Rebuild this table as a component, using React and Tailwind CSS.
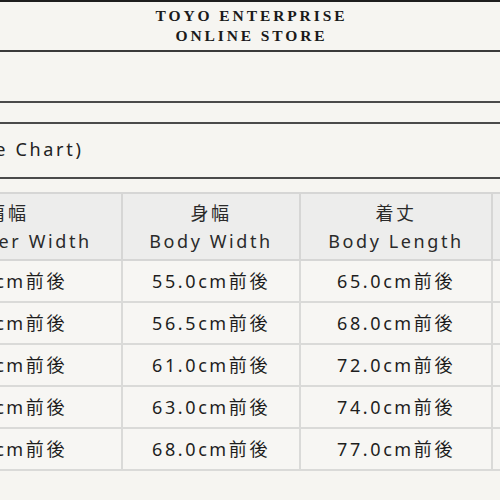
import React from "react";

const sans = { fontFamily: '"Noto Sans", "Noto Sans CJK JP", sans-serif' };

const rows = [
  ["52.0", "55.0", "65.0"],
  ["53.5", "56.5", "68.0"],
  ["55.0", "61.0", "72.0"],
  ["56.5", "63.0", "74.0"],
  ["58.0", "68.0", "77.0"],
];

export default function App() {
  return (
    <div className="w-[500px] h-[500px] overflow-hidden bg-[#f6f5f1] text-[#222]">
      <div className="h-[2px] bg-[#1e1e1e]" />
      <div className="h-[48px] flex flex-col items-center justify-center font-['Liberation_Serif',serif] font-bold text-[15.5px] leading-[20px] tracking-[2.9px] text-[#1a1a1a]">
        <div className="pl-[3px]">TOYO ENTERPRISE</div>
        <div className="pl-[3px]">ONLINE STORE</div>
      </div>
      <div className="h-[2px] bg-[#3a3a3a]" />
      <div className="h-[49px]" />
      <div className="h-[2px] bg-[#4a4a4a]" />
      <div className="h-[19px]" />
      <div className="h-[2px] bg-[#4a4a4a]" />
      <div className="h-[53px] flex items-center">
        <div className="ml-[-44px] text-[18px] tracking-[2.7px] text-[#222] pb-[2px]" style={sans}>(Size Chart)</div>
      </div>
      <div className="h-[2px] bg-[#4a4a4a]" />
      <div className="h-[13px]" />
      <table className="table-fixed border-collapse ml-[-107px] w-[714px] text-[18px] tracking-[2.6px]" style={sans}>
        <colgroup>
          <col className="w-[228px]" />
          <col className="w-[178px]" />
          <col className="w-[192px]" />
          <col className="w-[116px]" />
        </colgroup>
        <thead>
          <tr className="bg-[#ededec]">
            <th className="h-[67px] border-2 border-[#d6d6d5] font-normal leading-[28px] text-[#2a2a2a]">
              <div>肩幅</div>
              <div>Shoulder Width</div>
            </th>
            <th className="h-[67px] border-2 border-[#d6d6d5] font-normal leading-[28px] text-[#2a2a2a]">
              <div>身幅</div>
              <div>Body Width</div>
            </th>
            <th className="h-[67px] border-2 border-[#d6d6d5] font-normal leading-[28px] text-[#2a2a2a]">
              <div>着丈</div>
              <div>Body Length</div>
            </th>
            <th className="h-[67px] border-2 border-[#d6d6d5] font-normal leading-[28px] text-[#2a2a2a]">
              <div>袖丈</div>
              <div>Sleeve</div>
            </th>
          </tr>
        </thead>
        <tbody>
          {rows.map((r, i) => (
            <tr key={i} className="bg-[#f7f6f3]">
              {r.map((v, j) => (
                <td key={j} className="h-[42px] border-2 border-[#dadad8] text-center leading-[28px] text-[#1e1e1e]">
                  {v}cm前後
                </td>
              ))}
              <td className="h-[42px] border-2 border-[#dadad8] text-center leading-[28px]">&nbsp;</td>
            </tr>
          ))}
        </tbody>
      </table>
    </div>
  );
}
